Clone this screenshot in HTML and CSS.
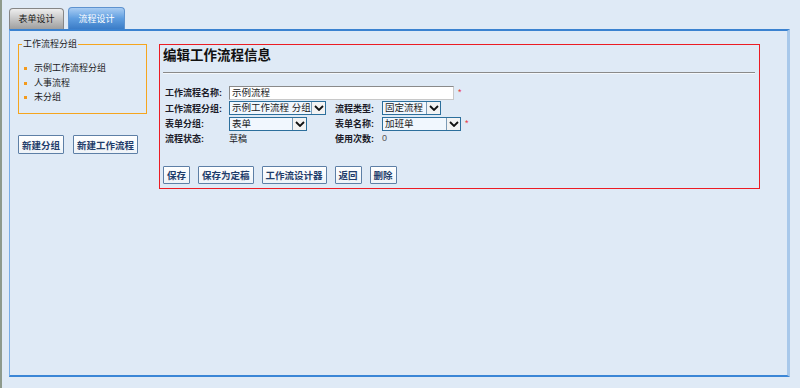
FILE: index.html
```html
<!DOCTYPE html>
<html lang="zh-CN">
<head>
    <meta charset="UTF-8">
    <title>流程设计</title>
    <link rel="stylesheet" href="styles.css">
</head>
<body>
    <div class="tabs">
        <div class="tab">表单设计</div>
        <div class="tab active">流程设计</div>
    </div>

    <div class="panel">
        <div class="side">
            <fieldset class="group">
                <legend>工作流程分组</legend>
                <ul>
                    <li>示例工作流程分组</li>
                    <li>人事流程</li>
                    <li>未分组</li>
                </ul>
            </fieldset>
            <div class="side-buttons">
                <button class="btn">新建分组</button>
                <button class="btn">新建工作流程</button>
            </div>
        </div>

        <div class="main">
            <h2>编辑工作流程信息</h2>
            <hr>
            <div class="form">
                <span class="label">工作流程名称:</span>
                <span class="field wide">
                    <span class="text-input">示例流程</span>
                    <span class="req">*</span>
                </span>

                <span class="label">工作流程分组:</span>
                <span class="field">
                    <span class="select s-group">示例工作流程 分组<span class="arrow"><svg width="10" height="6" viewBox="0 0 10 6"><path d="M1 1 L5 5 L9 1" fill="none" stroke="#111" stroke-width="1.8"/></svg></span></span>
                </span>
                <span class="label">流程类型:</span>
                <span class="field">
                    <span class="select s-type">固定流程<span class="arrow"><svg width="10" height="6" viewBox="0 0 10 6"><path d="M1 1 L5 5 L9 1" fill="none" stroke="#111" stroke-width="1.8"/></svg></span></span>
                </span>

                <span class="label">表单分组:</span>
                <span class="field">
                    <span class="select s-form">表单<span class="arrow"><svg width="10" height="6" viewBox="0 0 10 6"><path d="M1 1 L5 5 L9 1" fill="none" stroke="#111" stroke-width="1.8"/></svg></span></span>
                </span>
                <span class="label">表单名称:</span>
                <span class="field">
                    <span class="select s-name">加班单<span class="arrow"><svg width="10" height="6" viewBox="0 0 10 6"><path d="M1 1 L5 5 L9 1" fill="none" stroke="#111" stroke-width="1.8"/></svg></span></span>
                    <span class="req">*</span>
                </span>

                <span class="label">流程状态:</span>
                <span class="field value">草稿</span>
                <span class="label">使用次数:</span>
                <span class="field value count">0</span>
            </div>

            <div class="buttons">
                <button class="btn">保存</button>
                <button class="btn">保存为定稿</button>
                <button class="btn">工作流设计器</button>
                <button class="btn">返回</button>
                <button class="btn">删除</button>
            </div>
        </div>
    </div>
</body>
</html>
```

FILE: styles.css
```css
body {
    margin: 0;
    height: 388px;
    background-color: #dfeaf6;
    border-left: 2px solid #8e9a8c;
    font-family: "Liberation Sans", "Noto Sans CJK SC", sans-serif;
    font-size: 9px;
    color: #1b1b24;
    box-sizing: border-box;
}
.tabs {
    display: flex;
    align-items: flex-end;
    gap: 4px;
    padding: 7px 0 0 7px;
    height: 22px;
    border-top: 1px solid #c9dcf0;
    box-sizing: content-box;
    margin-top: -1px;
}
.tab {
    width: 53px;
    height: 20px;
    line-height: 20px;
    text-align: center;
    border: 1px solid #868686;
    border-bottom: none;
    border-radius: 4px 4px 0 0;
    background: linear-gradient(#eeeeee, #c2c2c2 55%, #9f9f9f);
    color: #1a1a1a;
}
.tab.active {
    width: 55px;
    height: 21px;
    line-height: 22px;
    border-color: #5e93cf;
    background: linear-gradient(#a9cdf3, #5f9ee0 50%, #3b7cc7);
    color: #fff;
}
.panel {
    display: flex;
    margin-left: 7px;
    width: 781px;
    height: 348px;
    box-sizing: border-box;
    border-top: 2px solid #3b82d0;
    border-left: 1px solid #7aaee6;
    border-right: 3px solid #a8c8ea;
    border-bottom: 2px solid #3b86d6;
}
.side {
    width: 129px;
    margin: 7px 0 0 8px;
}
.group {
    margin: 0;
    padding: 11px 0 6px 5px;
    height: 76px;
    box-sizing: border-box;
    border: 1px solid #f5a51e;
}
.group legend {
    padding: 0 1px;
    margin-left: -2px;
    line-height: 12px;
}
.group ul {
    list-style: none;
    margin: 0;
    padding: 0;
}
.group li {
    position: relative;
    padding-left: 10px;
    line-height: 14.5px;
}
.group li::before {
    content: "";
    position: absolute;
    left: 0;
    top: 6px;
    width: 3px;
    height: 3px;
    background-color: #f39a1c;
}
.side-buttons {
    display: flex;
    gap: 9px;
    margin-top: 21px;
}
.btn {
    font-family: "Liberation Sans", "Noto Sans CJK SC", sans-serif;
    font-size: 9.5px;
    font-weight: bold;
    color: #1f3d6b;
    background: linear-gradient(#ffffff, #eef3f8);
    border: 1px solid #5d7fa6;
    border-radius: 1px;
    padding: 0 3px;
    height: 18px;
    cursor: pointer;
}
.side-buttons .btn {
    height: 19px;
}
.main {
    margin: 13px 0 0 12px;
    width: 601px;
    height: 145px;
    box-sizing: border-box;
    border: 1px solid #ec1c24;
    padding: 2px 4px 0 3px;
}
.main h2 {
    margin: 0;
    font-size: 13.5px;
    line-height: 17px;
    font-weight: bold;
    color: #111;
}
.main hr {
    margin: 8px 0 0 0;
    border: none;
    border-top: 1px solid #8a8a8a;
    border-bottom: 1px solid #f4f8fc;
    height: 0;
}
.form {
    display: grid;
    grid-template-columns: 64px 106px 47px auto;
    grid-template-rows: 15px 16px 15px 14px;
    align-items: center;
    margin: 11px 0 0 2px;
}
.label {
    font-weight: bold;
    color: #1b1b28;
    white-space: nowrap;
}
.field {
    display: flex;
    align-items: center;
    gap: 4px;
    white-space: nowrap;
}
.field.wide {
    grid-column: 2 / 5;
}
.text-input {
    width: 221px;
    height: 12px;
    line-height: 12px;
    padding-left: 2px;
    font-size: 9.5px;
    background-color: #fff;
    border: 1px solid;
    border-color: #8a8a8a #c8c8c8 #c8c8c8 #8a8a8a;
}
.req {
    color: #e8343c;
    font-size: 9px;
    line-height: 9px;
}
.select {
    display: flex;
    align-items: center;
    justify-content: space-between;
    height: 12px;
    line-height: 12px;
    padding-left: 2px;
    font-size: 9.5px;
    background-color: #f1f7fe;
    border: 1px solid #2c6f9c;
    box-sizing: content-box;
}
.select .arrow {
    display: flex;
    align-items: center;
    justify-content: center;
    width: 13px;
    height: 12px;
    background-color: #f3f3f3;
    border-left: 1px solid #7c9bb6;
}
.s-group { width: 93px; }
.s-type { width: 55px; }
.s-form { width: 74px; }
.s-name { width: 75px; }
.value {
    color: #1b1b28;
}
.count {
    color: #555;
}
.buttons {
    display: flex;
    gap: 8px;
    margin-top: 21px;
}
```
